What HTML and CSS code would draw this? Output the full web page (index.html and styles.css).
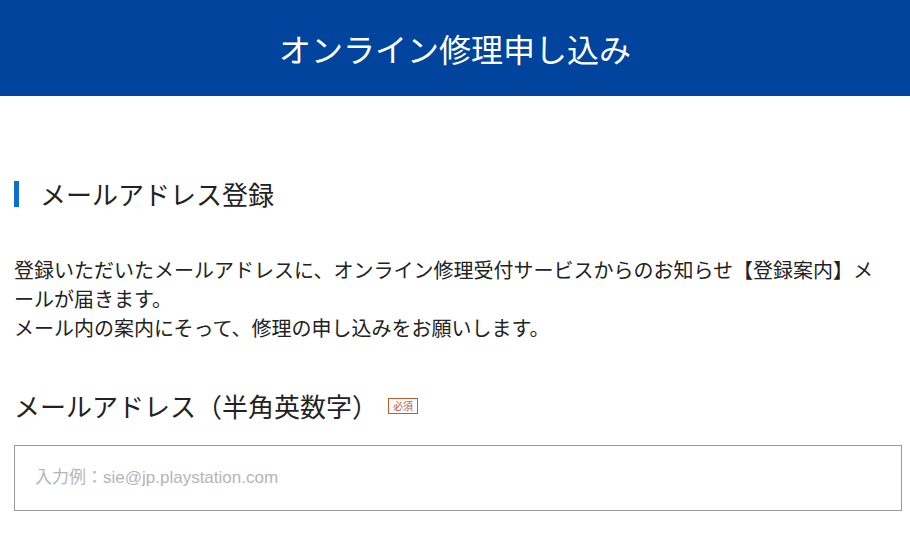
FILE: index.html
```html
<!DOCTYPE html>
<html lang="ja">
<head>
    <meta charset="utf-8">
    <title>オンライン修理申し込み</title>
    <link rel="stylesheet" href="styles.css">
</head>
<body>
    <div class="page-header">
        <h1>オンライン修理申し込み</h1>
    </div>
    <div id="content">
        <h2 class="section-title">メールアドレス登録</h2>
        <p class="lead">
            登録いただいたメールアドレスに、オンライン修理受付サービスからのお知らせ【登録案内】メー<wbr>ルが届きます。<br>
            メール内の案内にそって、修理の申し込みをお願いします。
        </p>
        <div class="field">
            <label class="field-label" for="email">メールアドレス（半角英数字）<span class="required">必須</span></label>
            <input type="text" id="email" class="text-input" placeholder="入力例：sie@jp.playstation.com">
        </div>
    </div>
</body>
</html>
```

FILE: styles.css
```css
body {
    margin: 0;
    font-family: "Noto Sans CJK JP", "Noto Sans", sans-serif;
    color: #222;
    background: #fff;
}

.page-header {
    background: #00449e;
    height: 96px;
    display: flex;
    align-items: center;
    justify-content: center;
}

.page-header h1 {
    margin: 0;
    color: #fff;
    font-size: 32px;
    font-weight: normal;
    line-height: 1;
}

#content {
    padding: 0 8px 0 14px;
}

.section-title {
    margin: 85px 0 0;
    border-left: 5px solid #0a6fce;
    padding-left: 21px;
    font-size: 26px;
    font-weight: normal;
    line-height: 26px;
}

.lead {
    margin: 48px 0 0;
    max-width: 876px;
    font-size: 20px;
    line-height: 29px;
}

.field {
    margin-top: 46px;
}

.field-label {
    display: flex;
    align-items: center;
    font-size: 26px;
    line-height: 36px;
}

.required {
    margin-left: 10px;
    border: 1px solid #c45a2c;
    color: #c45a2c;
    font-size: 10px;
    line-height: 14px;
    padding: 0 4px;
}

.text-input {
    display: block;
    box-sizing: border-box;
    width: 100%;
    height: 66px;
    margin-top: 21px;
    border: 1px solid #999;
    padding: 0 20px;
    font-family: "Liberation Sans", "Noto Sans CJK JP", sans-serif;
    font-size: 17px;
    color: #222;
    outline: none;
}

.text-input::placeholder {
    color: #b5b5b5;
}
```
